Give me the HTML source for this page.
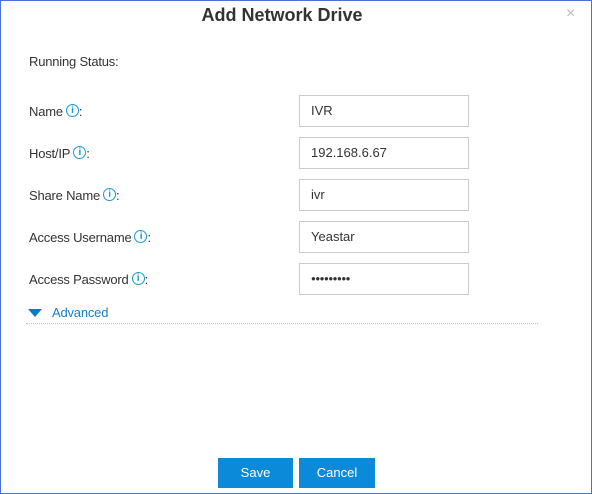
<!DOCTYPE html><html><head><style>
body{margin:0;width:592px;height:494px;overflow:hidden;background:#fff;font-family:"Liberation Sans",sans-serif;}
.frame{position:absolute;left:0;top:0;width:590px;height:492px;border:1px solid #4a6ee8;}
.t{position:absolute;font-size:13px;color:#333;letter-spacing:-0.2px}
.i{display:inline-block;width:11px;height:11px;border:1.5px solid #1a9ad6;border-radius:50%;color:#1a9ad6;font-size:10px;line-height:11px;text-align:center;font-weight:bold;vertical-align:3px;margin-left:3px;box-sizing:content-box}
.in{position:absolute;left:299px;border:1px solid #ccc;font-size:13px;color:#333;line-height:30px;padding-left:11px;box-sizing:border-box;width:170px;height:32px}
.b{position:absolute;top:458px;height:30px;width:75px;background:#0a8ad8;color:#fff;font-size:13px;text-align:center;line-height:30px}
</style></head><body><div class="frame"></div>
<div style="position:absolute;left:0;width:564px;top:5px;text-align:center;font-weight:bold;font-size:18px;color:#333">Add Network Drive</div>
<div style="position:absolute;left:566px;top:5px;font-size:16px;color:#bbb">×</div>
<div class="t" style="left:29px;top:54px">Running Status:</div>
<div class="t" style="left:29px;top:104px">Name<span class="i">i</span>:</div>
<div class="t" style="left:29px;top:146px">Host/IP<span class="i">i</span>:</div>
<div class="t" style="left:29px;top:188px">Share Name<span class="i">i</span>:</div>
<div class="t" style="left:29px;top:230px">Access Username<span class="i">i</span>:</div>
<div class="t" style="left:29px;top:272px">Access Password<span class="i">i</span>:</div>
<div class="in" style="top:95px">IVR</div>
<div class="in" style="top:137px">192.168.6.67</div>
<div class="in" style="top:179px">ivr</div>
<div class="in" style="top:221px">Yeastar</div>
<div class="in" style="top:263px;font-size:8px;letter-spacing:-0.5px">●●●●●●●●●</div>
<div style="position:absolute;left:28px;top:309px;width:0;height:0;border-left:7px solid transparent;border-right:7px solid transparent;border-top:8px solid #0a7dc8"></div>
<div class="t" style="left:52px;top:305px;color:#1a7fc8">Advanced</div>
<div style="position:absolute;left:26px;top:323px;width:512px;border-top:1px dotted #bbb"></div>
<div class="b" style="left:218px">Save</div>
<div class="b" style="left:299px;width:76px">Cancel</div>
</body></html>
